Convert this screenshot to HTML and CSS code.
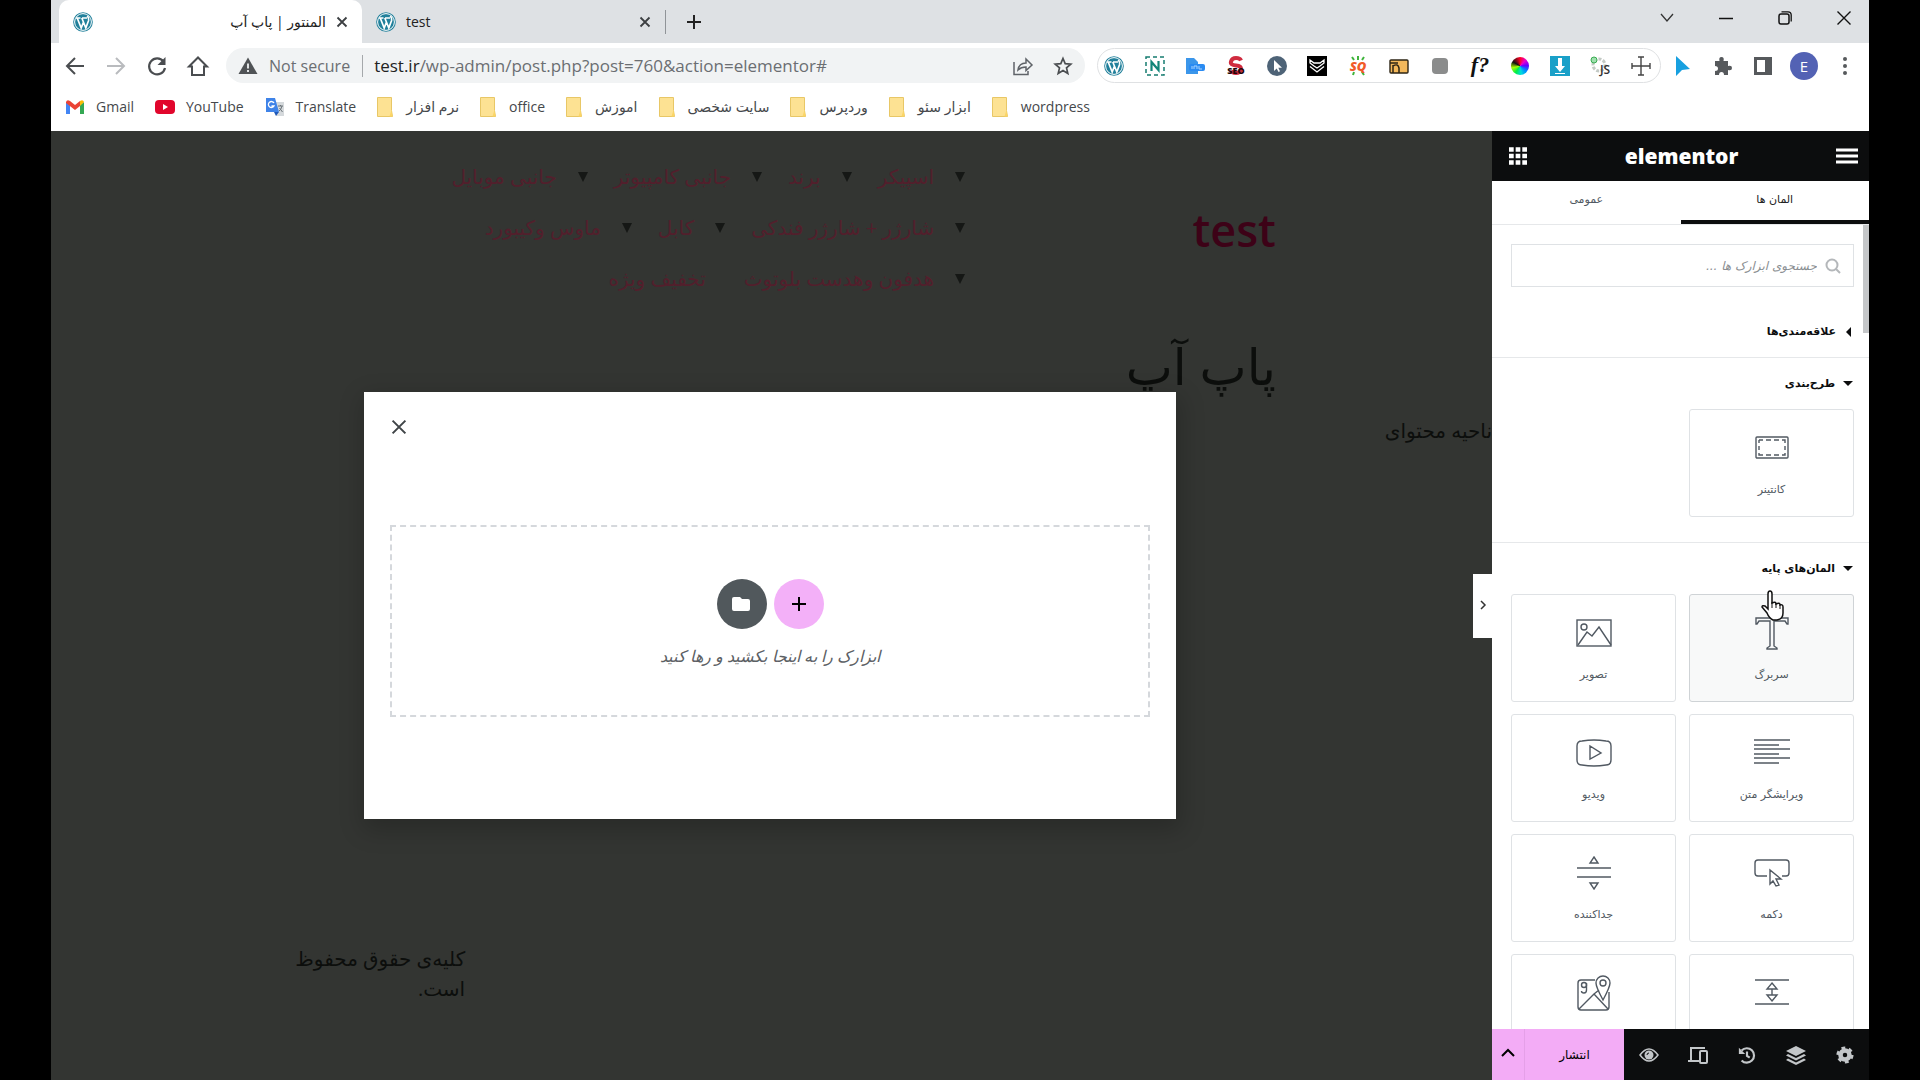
FILE: index.html
```html
<!DOCTYPE html>
<html lang="fa">
<head>
    <meta charset="utf-8">
    <title>المنتور | پاپ آپ</title>
    <link rel="stylesheet" href="styles.css">
</head>
<body>
    <svg class="defs" aria-hidden="true">
        <symbol id="wp" viewBox="0 0 20 20">
            <circle cx="10" cy="10" r="9.8" fill="#21809b"/>
            <circle cx="10" cy="10" r="8.4" fill="none" stroke="#fff" stroke-width="1"/>
            <path d="M3 6h4.500M9 6h5M4.200 6l4 10L10.500 10M8.800 6l4 10L15.600 8.500C16.400 6 14.800 5 14.300 4" fill="none" stroke="#fff" stroke-width="1.700"/>
        </symbol>
        <symbol id="folder" viewBox="0 0 16 20">
            <path d="M.5.5h14v13l1 6H.5z" fill="#fde293" stroke="#e8c766"/>
            <path d="M14.500 13l-2 6.500h3z" fill="#fbd566"/>
        </symbol>
        <symbol id="close" viewBox="0 0 12 12">
            <path d="M1.500 1.500l9 9M10.500 1.500l-9 9" fill="none" stroke="currentColor" stroke-width="1.800"/>
        </symbol>
    </svg>

    <div class="browser">
        <header class="chrome">
            <div class="tabstrip">
                <div class="tab active">
                    <svg class="i20"><use href="#wp"/></svg>
                    <span class="tab-title" dir="rtl">المنتور | پاپ آپ</span>
                    <button class="icon-btn" aria-label="Close tab"><svg class="i12"><use href="#close"/></svg></button>
                </div>
                <div class="tab">
                    <svg class="i20"><use href="#wp"/></svg>
                    <span class="tab-title">test</span>
                    <button class="icon-btn" aria-label="Close tab"><svg class="i12"><use href="#close"/></svg></button>
                </div>
                <button class="icon-btn new-tab" aria-label="New tab"><svg class="i16" viewBox="0 0 16 16"><path d="M8 1v14M1 8h14" stroke="#222" stroke-width="2"/></svg></button>
                <div class="window-controls">
                    <button class="icon-btn" aria-label="Search tabs"><svg class="i16" viewBox="0 0 16 16"><path d="M2 4l6 7 6-7" fill="none" stroke="#333" stroke-width="1.300"/></svg></button>
                    <button class="icon-btn" aria-label="Minimize"><svg class="i16" viewBox="0 0 16 16"><path d="M1 8.500h14" stroke="#111" stroke-width="1.500"/></svg></button>
                    <button class="icon-btn" aria-label="Restore"><svg class="i16" viewBox="0 0 16 16"><rect x="2" y="4" width="10" height="10" rx="2" fill="none" stroke="#111" stroke-width="1.500"/><path d="M4.500 1.800H11q3.200 0 3.200 3.200v6.500" fill="none" stroke="#111" stroke-width="1.300"/></svg></button>
                    <button class="icon-btn" aria-label="Close"><svg class="i16" viewBox="0 0 16 16"><path d="M1.500 1.500l13 13M14.500 1.500l-13 13" stroke="#111" stroke-width="1.400"/></svg></button>
                </div>
            </div>

            <div class="toolbar">
                <nav class="nav-buttons">
                    <button class="icon-btn" aria-label="Back"><svg class="i20" viewBox="0 0 20 20"><path d="M19 10H2M10 2l-8 8 8 8" fill="none" stroke="#4a4d50" stroke-width="2"/></svg></button>
                    <button class="icon-btn" aria-label="Forward"><svg class="i20" viewBox="0 0 20 20"><path d="M1 10h17M10 2l8 8-8 8" fill="none" stroke="#b9bbbe" stroke-width="2"/></svg></button>
                    <button class="icon-btn" aria-label="Reload"><svg class="i20" viewBox="0 0 20 20"><path d="M16.500 5.500A8 8 0 1 0 18 12" fill="none" stroke="#4a4d50" stroke-width="2.200"/><path d="M18.500 1v8h-8z" fill="#4a4d50"/></svg></button>
                    <button class="icon-btn" aria-label="Home"><svg class="i20" viewBox="0 0 20 20"><path d="M1 10.500L10 1.500l9 9h-3V19H4v-8.500z" fill="none" stroke="#4a4d50" stroke-width="2"/></svg></button>
                </nav>
                <div class="address">
                    <svg class="i20" viewBox="0 0 20 20"><path d="M10 1.500L19.500 18H.5z" fill="#505356"/><path d="M10 7.500v5M10 14v2" stroke="#f1f3f4" stroke-width="1.800"/></svg>
                    <span class="not-secure">Not secure</span>
                    <span class="url"><b>test.ir</b>/wp-admin/post.php?post=760&amp;action=elementor#</span>
                    <button class="icon-btn" aria-label="Share"><svg class="i20" viewBox="0 0 20 20"><path d="M1 6v12.500h14V15" fill="none" stroke="#5f6368" stroke-width="1.500"/><path d="M5 14q1-7 8-7V3l6 6-6 5.500V11q-5 0-8 3z" fill="none" stroke="#5f6368" stroke-width="1.500"/></svg></button>
                    <button class="icon-btn" aria-label="Bookmark"><svg class="i20" viewBox="0 0 20 20"><path d="M10 2.500l2.200 5.200 5.600.5-4.300 3.700 1.300 5.500-4.800-2.900-4.800 2.900 1.300-5.500L2.200 8.200l5.600-.5z" fill="none" stroke="#4a4d50" stroke-width="1.700"/></svg></button>
                </div>
                <div class="extensions">
                    <svg class="i20"><use href="#wp"/></svg>
                    <svg class="i20" viewBox="0 0 20 20"><rect x="1" y="1" width="18" height="18" fill="none" stroke="#167c70" stroke-width="1.500" stroke-dasharray="4 3"/><path d="M6.500 15V6l7 8V5" fill="none" stroke="#128579" stroke-width="2.200"/></svg>
                    <svg class="i20" viewBox="0 0 20 20"><path d="M1 2h8l4 4v12H1z" fill="#3b96ea"/><rect x="4" y="8" width="16" height="7" rx="2" fill="#2a8bf2"/><path d="M7 10v3M9 13v-3h3v3M14 10v3h3" fill="none" stroke="#a8d4ff"/></svg>
                    <svg class="i20" viewBox="0 0 20 20"><path d="M15 4.500Q14 2 10 2T5 5.500t5 4 5 4-5 3.500-5-2.500" fill="none" stroke="#d02b3f" stroke-width="4"/><text x="10" y="18" class="ic-seo">SEO</text></svg>
                    <svg class="i20" viewBox="0 0 20 20"><circle cx="10" cy="10" r="10" fill="#4e6377"/><path d="M7 4v11l2.700-2.500L11.500 16l1.500-.8-1.700-3.500H15z" fill="#fff"/></svg>
                    <svg class="i20" viewBox="0 0 20 20"><path fill="#000" d="M0 0h20v20H0z"/><path d="M3 4l4 3h6l4-3v3l-4 3-3 2-3-2-4-3zM3 10.500l7 5.500 7-5.500" fill="none" stroke="#fff" stroke-width="1.300"/></svg>
                    <svg class="i20" viewBox="0 0 20 20"><path d="M4 1l2 3M10 0v4M16 1l-2 3M5 19l1-3M14 16l2 3" stroke="#3fb43b" stroke-width="2"/><text x="10" y="15" class="ic-sq">SQ</text></svg>
                    <svg class="i20" viewBox="0 0 20 20"><rect x="1" y="4" width="18" height="13" rx="1" fill="#f3b85b" stroke="#2d2415" stroke-width="1.400"/><path d="M1 7h8M4 17V9M4 10q5-3 6 2v5" fill="none" stroke="#2d2415" stroke-width="1.500"/></svg>
                    <svg class="i20" viewBox="0 0 20 20"><rect x="2" y="2" width="16" height="16" rx="4" fill="#8b8c8c"/></svg>
                    <svg class="i20" viewBox="0 0 20 20"><text x="10" y="16" class="ic-f">f?</text></svg>
                    <span class="wheel"></span>
                    <svg class="i20" viewBox="0 0 20 20"><path fill="#1aa0c8" d="M0 0h20v20H0z"/><path d="M8 2h4v8h3l-5 6-5-6h3zM5 17h10v1H5z" fill="#fff"/></svg>
                    <svg class="i20" viewBox="0 0 20 20"><circle cx="9" cy="9" r="6" fill="none" stroke="#c4cac5" stroke-width="3" stroke-dasharray="3 1.500"/><circle cx="4" cy="4" r="3" fill="#9fe0ae" stroke="#3aab52"/><text x="15" y="18" class="ic-js">JS</text></svg>
                    <svg class="i20" viewBox="0 0 20 20"><path d="M10 1v18M1 10h18M7 1h6M7 19h6M1 7v6M19 7v6" stroke="#444" stroke-width="1.400"/></svg>
                </div>
                <div class="tools">
                    <svg class="i20" viewBox="0 0 20 20"><path d="M3 0l14 13-8 1-6 6z" fill="#17a0e0"/></svg>
                    <svg class="i20" viewBox="0 0 20 20"><path d="M2 5h4.500q-1-4 2-4t2 4H15v5q4-1 4 2t-4 2v5h-4q0-3-2.500-3T6 19H2v-4q3 0 3-2.500T2 10z" fill="#56595c"/></svg>
                    <svg class="i20" viewBox="0 0 20 20"><path d="M1 1h18v18H1zM4 4v12h8V4z" fill="#56595c" fill-rule="evenodd"/></svg>
                    <span class="avatar">E</span>
                    <svg class="i20" viewBox="0 0 20 20" fill="#56595c"><circle cx="10" cy="3" r="2"/><circle cx="10" cy="10" r="2"/><circle cx="10" cy="17" r="2"/></svg>
                </div>
            </div>

            <nav class="bookmarks">
                <a href="#"><svg class="i20" viewBox="0 0 20 20"><path d="M1 17V5l4 3v9z" fill="#4285f4"/><path d="M15 17V8l4-3v12z" fill="#34a853"/><path d="M1 5q1-3 4-1l5 4 5-4v5l-5 4-9-7z" fill="#ea4335"/><path d="M15 4q3-2 4 1l-4 4z" fill="#fbbc04"/></svg>Gmail</a>
                <a href="#"><svg class="i20" viewBox="0 0 20 20"><rect y="3" width="20" height="14" rx="4" fill="#e1062c"/><path d="M8 7l5 3-5 3z" fill="#fff"/></svg>YouTube</a>
                <a href="#"><svg class="i20" viewBox="0 0 20 20"><path d="M8 5h11v14H11z" fill="#d5d9dc"/><path d="M1 1h9l4 14H1z" fill="#3f83e8"/><path d="M9 15h5l-3 4z" fill="#2059b8"/><path d="M9 6a3 3 0 1 0 0 3H6.500" fill="none" stroke="#fff" stroke-width="1.300"/><path d="M13 9h5M15.500 8v1M17 9q-1 4-3 5M14.500 11l3 4" stroke="#6b7378" fill="none"/></svg>Translate</a>
                <a href="#"><svg class="fold"><use href="#folder"/></svg>نرم افزار</a>
                <a href="#"><svg class="fold"><use href="#folder"/></svg>office</a>
                <a href="#"><svg class="fold"><use href="#folder"/></svg>اموزش</a>
                <a href="#"><svg class="fold"><use href="#folder"/></svg>سایت شخصی</a>
                <a href="#"><svg class="fold"><use href="#folder"/></svg>وردپرس</a>
                <a href="#"><svg class="fold"><use href="#folder"/></svg>ابزار سئو</a>
                <a href="#"><svg class="fold"><use href="#folder"/></svg>wordpress</a>
            </nav>
        </header>

        <div class="editor">
            <main class="preview" dir="rtl">
                <div class="site-header">
                    <a class="brand" href="#">test</a>
                    <ul class="menu">
                        <li class="has-sub"><a href="#">اسپیکر</a></li>
                        <li class="has-sub"><a href="#">برند</a></li>
                        <li class="has-sub"><a href="#">جانبی کامپیوتر</a></li>
                        <li class="has-sub"><a href="#">جانبی موبایل</a></li>
                        <li class="has-sub"><a href="#">شارژر + شارژر فندکی</a></li>
                        <li class="has-sub"><a href="#">کابل</a></li>
                        <li class="has-sub"><a href="#">ماوس وکیبورد</a></li>
                        <li class="has-sub"><a href="#">هدفون وهدست بلوتوث</a></li>
                        <li><a href="#">تخفیف ویژه</a></li>
                    </ul>
                </div>
                <h1 class="page-title">پاپ آپ</h1>
                <p class="content-area">ناحیه محتوای</p>
                <footer class="site-footer"><p>کلیه‌ی حقوق محفوظ است.</p></footer>

                <div class="overlay">
                    <section class="popup">
                        <button class="icon-btn popup-close" aria-label="بستن"><svg class="i14" viewBox="0 0 12 12"><path d="M.5.5l11 11M11.500.5l-11 11" stroke="#3f4447" stroke-width="1.700"/></svg></button>
                        <div class="drop-zone">
                            <div class="drop-buttons">
                                <button class="round add" aria-label="افزودن"><svg class="i14" viewBox="0 0 14 14"><path d="M7 0v14M0 7h14" stroke="#000" stroke-width="2"/></svg></button>
                                <button class="round lib" aria-label="کتابخانه"><svg class="i20" viewBox="0 0 20 20"><path d="M2 3h6l2 2h6q2 0 2 2v8q0 2-2 2H2q-2 0-2-2V5q0-2 2-2z" fill="#fff"/></svg></button>
                            </div>
                            <p>ابزارک را به اینجا بکشید و رها کنید</p>
                        </div>
                    </section>
                </div>
            </main>

            <aside class="panel" dir="rtl">
                <button class="collapse" aria-label="بستن پنل"><svg class="i12" viewBox="0 0 12 12"><path d="M4 2l4 4-4 4" fill="none" stroke="#333" stroke-width="1.500"/></svg></button>
                <div class="panel-header">
                    <button class="icon-btn" aria-label="منو"><svg class="i22" viewBox="0 0 22 16"><path d="M0 2h22M0 8h22M0 14h22" stroke="#fff" stroke-width="2.800"/></svg></button>
                    <span class="logo">elementor</span>
                    <button class="icon-btn" aria-label="ابزارک‌ها"><svg class="i18" viewBox="0 0 18 18"><path d="M0 2.500h18M0 9h18M0 15.500h18" stroke="#fff" stroke-width="4.500" stroke-dasharray="4.700 1.950"/></svg></button>
                </div>
                <div class="panel-tabs">
                    <button class="selected">المان ها</button>
                    <button>عمومی</button>
                </div>
                <div class="panel-body">
                    <div class="search">
                        <svg class="i16" viewBox="0 0 16 16"><circle cx="7" cy="7" r="5.500" fill="none" stroke="#b4b7ba" stroke-width="2"/><path d="M11 11l4 4" stroke="#b4b7ba" stroke-width="2"/></svg>
                        <input type="text" aria-label="جستجو" placeholder="جستجوی ابزارک ها ...">
                    </div>
                    <section class="category">
                        <h2 class="closed">علاقه‌مندی‌ها</h2>
                    </section>
                    <section class="category">
                        <h2>طرح‌بندی</h2>
                        <div class="widgets">
                            <button class="widget"><svg viewBox="0 0 36 36"><rect x="2" y="7" width="32" height="21" rx="1"/><path d="M5 10h4M12 10h5M20 10h5M28 10h3v3M31 16v4M31 23v2h-3M25 25h-5M17 25h-5M9 25H5v-2M5 20v-4M5 13v-3"/></svg>کانتینر</button>
                        </div>
                    </section>
                    <section class="category">
                        <h2>المان‌های پایه</h2>
                        <div class="widgets">
                            <button class="widget hover"><svg viewBox="0 0 36 36"><path d="M2 9V3h32v6h-1l-2-3H20v25l3 2v1H13v-1l3-2V6H5L3 9z"/></svg>سربرگ</button>
                            <button class="widget"><svg viewBox="0 0 36 36"><rect x="1" y="5" width="34" height="26"/><circle cx="8" cy="12" r="3"/><path d="M2 30l9-13 5 4 7-9 12 18"/></svg>تصویر</button>
                            <button class="widget"><svg viewBox="0 0 36 36"><path d="M0 5h36M0 10h25M0 14h36M0 19h25M0 23h36M0 28h25"/></svg>ویرایشگر متن</button>
                            <button class="widget"><svg viewBox="0 0 36 36"><path d="M6 6q12-2 24 0 5 0 5 5v14q0 5-5 5-12 2-24 0-5 0-5-5V11q0-5 5-5zM14 11v13l11-6z"/></svg>ویدیو</button>
                            <button class="widget"><svg viewBox="0 0 36 36"><path d="M13 21H4q-3 0-3-3V8q0-3 3-3h28q3 0 3 3v10q0 3-3 3h-4M16 15v14l3-3 3 5 3-1-3-6h5z"/></svg>دکمه</button>
                            <button class="widget"><svg viewBox="0 0 36 36"><path d="M1 13h34M1 22h34M18 2l4 6h-8zM18 34l4-6h-8z"/></svg>جداکننده</button>
                            <button class="widget" aria-label="فاصله"><svg viewBox="0 0 36 36"><path d="M1 5h34M1 29h34M18 8l5 6H13zM18 26l5-6H13zM18 14v6"/></svg></button>
                            <button class="widget" aria-label="نقشه گوگل"><svg viewBox="0 0 36 36"><path d="M19 5H5Q2 5 2 8v24q0 3 3 3h25q3 0 3-3V17M3 34l15-15 14 15M27 25Q20 12 20 8a7 7 0 0 1 14 0q0 4-7 17zM18 19l5-4"/><circle cx="27" cy="8" r="3"/><circle cx="8" cy="10" r="2.500"/><path d="M10.500 8v7q0 3-2.500 3t-2.500-2"/></svg></button>
                        </div>
                    </section>
                    <svg class="hand" viewBox="0 0 24 32"><path d="M8 18V4q0-3 2-3t2 3v9q4-2 4 1 4-2 4 1 3-1 3 2v6q0 6-6 7h-4q-4-2-6-7l-5-6q0-2 3-1l3 3z" fill="#fff" stroke="#111" stroke-width="1.500"/><path d="M12 12v6M16 13v5M20 15v4" stroke="#111"/></svg>
                    <span class="scroll-thumb"></span>
                </div>
                <footer class="panel-footer">
                    <button class="icon-btn" aria-label="تنظیمات"><svg class="i18" viewBox="0 0 20 20"><circle cx="10" cy="10" r="5" fill="none" stroke="#c3c6c9" stroke-width="5"/><circle cx="10" cy="10" r="8" fill="none" stroke="#c3c6c9" stroke-width="3" stroke-dasharray="4.200 4.180"/></svg></button>
                    <button class="icon-btn" aria-label="لایه‌ها"><svg class="i20" viewBox="0 0 20 20" fill="#c3c6c9"><path d="M10 1l10 5-10 5L0 6z"/><path d="M2 9l8 4 8-4 2 1.500-10 5-10-5zM2 13.500l8 4 8-4 2 1.500-10 5-10-5z"/></svg></button>
                    <button class="icon-btn" aria-label="تاریخچه"><svg class="i18" viewBox="0 0 20 20" fill="none" stroke="#c3c6c9" stroke-width="2.400"><path d="M4 5a8 8 0 1 1 0 11M10 6v5l3 2"/><path d="M1 2v7h7z" fill="#c3c6c9" stroke="none"/></svg></button>
                    <button class="icon-btn" aria-label="واکنش‌گرا"><svg class="i20" viewBox="0 0 20 20" fill="none" stroke="#c3c6c9" stroke-width="2"><path d="M17 3H3v12M0 16h11"/><rect x="12" y="6" width="7" height="12" rx="1"/></svg></button>
                    <button class="icon-btn" aria-label="پیش‌نمایش"><svg class="i20" viewBox="0 0 20 20"><path d="M1 10q9-12 18 0-9 12-18 0z" fill="none" stroke="#c3c6c9" stroke-width="1.500"/><circle cx="10" cy="10" r="4.500" fill="#c3c6c9"/><path d="M8 10a2 2 0 0 1 2-2" stroke="#0c0d0e" fill="none"/></svg></button>
                    <button class="publish">انتشار</button>
                    <button class="publish-more" aria-label="گزینه‌ها"><svg class="i14" viewBox="0 0 14 14"><path d="M1 10l6-6 6 6" fill="none" stroke="#000" stroke-width="2"/></svg></button>
                </footer>
            </aside>
        </div>
    </div>
</body>
</html>
```
FILE: styles.css
```css
* { box-sizing: border-box; }
body {
    margin: 0;
    background: #000;
    font-family: "Open Sans", "DejaVu Sans", sans-serif;
    color: #222;
}
button, input { font-family: inherit; }
button { cursor: pointer; }
a { color: inherit; text-decoration: none; }
p, h1, h2, ul { margin: 0; padding: 0; }
svg { flex-shrink: 0; overflow: visible; }
.defs { display: none; }
.i12 { width: 12px; height: 12px; }
.i14 { width: 14px; height: 14px; }
.i16 { width: 16px; height: 16px; }
.i18 { width: 18px; height: 18px; }
.i20 { width: 20px; height: 20px; }
.i22 { width: 22px; height: 16px; }
.fold { width: 16px; height: 20px; }
.icon-btn {
    display: flex;
    align-items: center;
    justify-content: center;
    padding: 0;
    border: 0;
    background: none;
    color: #3c3f42;
}

.browser {
    display: flex;
    flex-direction: column;
    height: 100vh;
    margin: 0 51px;
}

/* browser top */
.chrome { background: #fff; }
.tabstrip {
    display: flex;
    align-items: center;
    height: 43px;
    padding-left: 8px;
    background: #dee1e4;
}
.tab {
    display: flex;
    align-items: center;
    gap: 10px;
    width: 303px;
    height: 43px;
    padding: 0 14px;
    font-size: 14px;
}
.tab.active {
    background: #fff;
    border-radius: 10px 10px 0 0;
}
.tab-title { flex: 1; }
.new-tab {
    padding-left: 20px;
    height: 24px;
    border-left: 1px solid #909498;
}
.window-controls {
    display: flex;
    gap: 43px;
    margin-left: auto;
    padding: 0 17px 7px 0;
}
.toolbar {
    display: flex;
    align-items: center;
    height: 45px;
}
.nav-buttons {
    display: flex;
    gap: 21px;
    padding: 0 18px 0 14px;
}
.address {
    display: flex;
    align-items: center;
    flex: 1;
    gap: 11px;
    height: 35px;
    padding: 0 12px;
    border-radius: 18px;
    background: #f1f3f4;
    font-size: 16px;
    color: #6b6e72;
}
.address .icon-btn { margin-left: 9px; }
.not-secure {
    padding-right: 12px;
    border-right: 1px solid #a5a8ab;
    line-height: 22px;
}
.url { flex: 1; font-size: 17px; }
.url b { font-weight: 400; color: #222; }
.extensions {
    display: flex;
    align-items: center;
    justify-content: space-between;
    width: 564px;
    height: 35px;
    margin-left: 12px;
    padding: 0 9px 0 6px;
    border: 1px solid #dfe1e3;
    border-radius: 18px;
}
.ic-seo, .ic-sq, .ic-f, .ic-js {
    text-anchor: middle;
    font-family: "Open Sans", sans-serif;
    font-weight: 800;
}
.ic-seo { font-size: 9px; fill: #210408; }
.ic-sq { font-size: 13px; font-style: italic; fill: #f15a29; }
.ic-f { font-size: 22px; font-family: "Liberation Serif", serif; font-style: italic; fill: #111; }
.ic-js { font-size: 12px; font-weight: 600; fill: #333; }
.wheel {
    width: 18px;
    height: 18px;
    border-radius: 50%;
    background: conic-gradient(#f02, #e0c, #60f, #08f, #0dd, #0e4, #af0, #111 300deg, #f02);
}
.tools {
    display: flex;
    align-items: center;
    gap: 20px;
    padding: 0 14px 0 12px;
}
.avatar {
    width: 28px;
    height: 28px;
    margin: 0 -3px;
    border-radius: 50%;
    background: #5362b4;
    color: #fff;
    font-size: 15px;
    line-height: 28px;
    text-align: center;
}
.bookmarks {
    display: flex;
    gap: 21px;
    height: 43px;
    padding: 0 14px 6px;
    font-size: 14px;
    color: #45484b;
}
.bookmarks a {
    display: flex;
    align-items: center;
    gap: 11px;
}
.bookmarks .fold { margin-right: 2px; }

/* page behind the popup */
.editor {
    display: flex;
    flex: 1;
    min-height: 0;
}
.preview {
    position: relative;
    display: flex;
    flex-direction: column;
    flex: 1;
    overflow: hidden;
    background: #333532;
    color: #0c0e0c;
}
.site-header {
    display: flex;
    justify-content: space-between;
    width: 70%;
    margin: 20px auto 0;
}
.brand {
    padding-top: 46px;
    color: #3d0217;
    font-size: 45px;
    font-weight: 600;
    line-height: 66px;
}
.menu {
    display: flex;
    flex-wrap: wrap;
    align-content: flex-start;
    width: 620px;
    margin-left: 80px;
    list-style: none;
    font-size: 20px;
    line-height: 51px;
    color: #521f2c;
}
.menu li { padding-right: 14px; }
.menu .has-sub { padding: 0 0 0 24px; }
.has-sub::before {
    content: "";
    display: inline-block;
    margin: 0 2px 2px 21px;
    border: 5px solid transparent;
    border-top: 10px solid #151715;
    border-bottom: 0;
}
.page-title {
    width: 70%;
    margin: 22px auto 0;
    font-size: 50px;
    font-weight: 400;
    line-height: 80px;
}
.content-area {
    margin-top: 10px;
    font-size: 20px;
    line-height: 30px;
}
.site-footer {
    display: flex;
    justify-content: flex-end;
    width: 70%;
    margin: auto auto 76px;
    font-size: 20px;
    line-height: 30px;
}
.site-footer p { width: 198px; }
.overlay {
    position: absolute;
    inset: 0;
    display: flex;
    align-items: center;
    justify-content: center;
    padding-right: 3px;
}
.popup {
    width: 812px;
    padding: 25px 26px 102px;
    background: #fff;
    box-shadow: 2px 8px 23px 3px rgba(0, 0, 0, 0.2);
}
.popup-close {
    width: 18px;
    height: 20px;
    margin: 0 auto 88px 0;
}
.drop-zone {
    display: flex;
    flex-direction: column;
    align-items: center;
    gap: 16px;
    height: 192px;
    padding-top: 52px;
    border: 2px dashed #d5d8dc;
    font-size: 16px;
    font-style: italic;
    color: #5b6064;
}
.drop-buttons {
    display: flex;
    gap: 7px;
}
.round {
    display: flex;
    align-items: center;
    justify-content: center;
    width: 50px;
    height: 50px;
    padding: 0;
    border: 0;
    border-radius: 50%;
}
.round.add { background: #f3b0f8; }
.round.lib { background: #51585c; }

/* elementor panel */
.panel {
    position: relative;
    display: flex;
    flex-direction: column;
    width: 377px;
    background: #fff;
    font-family: "DejaVu Sans", sans-serif;
}
.collapse {
    position: absolute;
    top: 443px;
    right: 100%;
    width: 19px;
    height: 64px;
    padding: 0;
    border: 0;
    background: #fff;
}
.panel-header {
    display: flex;
    align-items: center;
    justify-content: space-between;
    height: 50px;
    padding: 0 11px 0 17px;
    background: #0c0d0e;
}
.logo {
    color: #fff;
    font-family: "Open Sans", sans-serif;
    font-size: 21px;
    font-weight: 800;
}
.panel-tabs {
    display: flex;
    border-bottom: 1px solid #e6e8ea;
}
.panel-tabs button {
    flex: 1;
    height: 43px;
    padding: 0 0 6px;
    border: 0;
    background: none;
    font-size: 11px;
    color: #515962;
}
.panel-tabs .selected {
    padding: 0 0 2px;
    border-bottom: 4px solid #0c0d0e;
    color: #222;
}
.panel-body {
    position: relative;
    flex: 1;
    overflow: hidden;
}
.search {
    display: flex;
    align-items: center;
    gap: 8px;
    height: 43px;
    margin: 19px 15px 19px 19px;
    padding: 0 12px;
    border: 1px solid #dfe2e5;
}
.search input {
    flex: 1;
    padding: 0;
    border: 0;
    outline: 0;
    background: none;
    font-size: 12px;
    font-style: italic;
}
.search input::placeholder { color: #8a8e92; }
.category {
    padding: 0 15px 0 19px;
}
.category + .category {
    padding-bottom: 25px;
    border-top: 1px solid #e6e8ea;
}
.category h2 {
    display: flex;
    align-items: center;
    gap: 8px;
    height: 51px;
    font-size: 11px;
    font-weight: 700;
    color: #0c0d0e;
}
.category h2::before {
    content: "";
    margin-right: 1px;
    border: 5px solid transparent;
    border-top: 5px solid #0c0d0e;
    border-bottom: 0;
}
.category .closed::before {
    margin: 0 3px 0 2px;
    border: 5px solid transparent;
    border-right: 5px solid #0c0d0e;
    border-left: 0;
}
.widgets {
    display: grid;
    grid-template-columns: 1fr 1fr;
    gap: 12px 13px;
}
.widget {
    display: flex;
    flex-direction: column;
    align-items: center;
    gap: 17px;
    height: 108px;
    padding: 20px 0 0;
    border: 1px solid #dfe2e5;
    border-radius: 3px;
    background: #fff;
    font-size: 11px;
    color: #515962;
}
.widget.hover {
    border-color: #cfd3d6;
    background: #f8f9f9;
}
.widget svg {
    width: 36px;
    height: 36px;
    fill: none;
    stroke: #515962;
    stroke-width: 1.4;
}
.hand {
    position: absolute;
    top: 365px;
    left: 267px;
    width: 26px;
    height: 32px;
}
.scroll-thumb {
    position: absolute;
    top: -43px;
    right: 0;
    width: 6px;
    height: 151px;
    background: #c4c6c8;
}
.panel-footer {
    display: flex;
    height: 51px;
    background: #0c0d0e;
}
.panel-footer .icon-btn {
    flex: 1;
}
.publish, .publish-more {
    height: 51px;
    padding: 0;
    border: 0;
    background: #f3acf6;
    font-size: 12px;
}
.publish { width: 99px; }
.publish-more {
    width: 33px;
    border-right: 1px solid #e5a0e8;
}
```
